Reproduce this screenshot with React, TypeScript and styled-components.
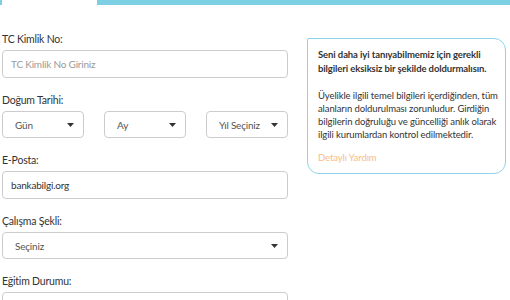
import React from 'react'
import styled, { createGlobalStyle } from 'styled-components'

const GlobalStyle = createGlobalStyle`
  body {
    margin: 0;
    background: #ffffff;
    font-family: Lato, "Open Sans", sans-serif;
    color: #333333;
  }
`

const Caret = () => (
  <svg width="7" height="4" viewBox="0 0 7 4">
    <path d="M0 0 L7 0 L3.5 4 Z" fill="#333" />
  </svg>
)

const App = () => {
  return (
    <Page>
      <GlobalStyle />
      <TabStrip>
        <TabEdge />
        <ActiveTab />
        <TabFill />
      </TabStrip>
      <Content>
        <Form>
          <Field>
            <Label>TC Kimlik No:</Label>
            <Input placeholder="TC Kimlik No Giriniz" />
          </Field>
          <Field>
            <Label>Doğum Tarihi:</Label>
            <DateRow>
              <Select>
                <span>Gün</span>
                <Caret />
              </Select>
              <Select>
                <span>Ay</span>
                <Caret />
              </Select>
              <Select>
                <span>Yıl Seçiniz</span>
                <Caret />
              </Select>
            </DateRow>
          </Field>
          <Field>
            <Label>E-Posta:</Label>
            <Input defaultValue="bankabilgi.org" />
          </Field>
          <Field>
            <Label>Çalışma Şekli:</Label>
            <Select>
              <span>Seçiniz</span>
              <Caret />
            </Select>
          </Field>
          <Field>
            <Label>Eğitim Durumu:</Label>
            <Select>
              <span>Seçiniz</span>
              <Caret />
            </Select>
          </Field>
        </Form>
        <InfoBox>
          <Lead>
            Seni daha iyi tanıyabilmemiz için gerekli bilgileri eksiksiz bir
            şekilde doldurmalısın.
          </Lead>
          <Body>
            Üyelikle ilgili temel bilgileri içerdiğinden, tüm alanların
            doldurulması zorunludur. Girdiğin bilgilerin doğruluğu ve güncelliği
            anlık olarak ilgili kurumlardan kontrol edilmektedir.
          </Body>
          <HelpLink href="#">Detaylı Yardım</HelpLink>
        </InfoBox>
      </Content>
    </Page>
  )
}

const Page = styled.div`
  width: 510px;
  height: 300px;
  overflow: hidden;
`

const TabStrip = styled.div`
  display: flex;
  height: 5px;
`

const TabEdge = styled.div`
  width: 2px;
  background: #7dd0e3;
`

const ActiveTab = styled.div`
  width: 95px;
  background: #ffffff;
`

const TabFill = styled.div`
  flex: 1;
  background: #7dd0e3;
`

const Content = styled.div`
  display: flex;
  align-items: flex-start;
  padding: 26px 0 0 2px;
`

const Form = styled.div`
  width: 286px;
  display: flex;
  flex-direction: column;
  gap: 14px;
`

const Field = styled.div`
  display: flex;
  flex-direction: column;
  gap: 3px;
`

const Label = styled.label`
  font-size: 10.5px;
  letter-spacing: -0.2px;
  line-height: 16px;
  color: #333333;
`

const Input = styled.input`
  box-sizing: border-box;
  height: 28px;
  width: 100%;
  border: 1px solid #cccccc;
  border-radius: 4px;
  padding: 0 8px;
  font-family: inherit;
  font-size: 10px;
  letter-spacing: -0.2px;
  color: #333333;
  outline: none;

  &::placeholder {
    color: #9a9a9a;
  }
`

const DateRow = styled.div`
  display: grid;
  grid-template-columns: repeat(3, 1fr);
  column-gap: 20px;
`

const Select = styled.div`
  box-sizing: border-box;
  height: 27px;
  border: 1px solid #cccccc;
  border-radius: 4px;
  padding: 0 9px 0 12px;
  display: flex;
  align-items: center;
  justify-content: space-between;
  font-size: 10px;
  letter-spacing: -0.2px;
  color: #555555;
`

const InfoBox = styled.div`
  box-sizing: border-box;
  width: 199px;
  margin: 7px 0 0 19px;
  padding: 8.5px 3px 9px 10px;
  border: 1.5px solid #8dd4e6;
  border-radius: 2px 12px 12px 12px;
  font-size: 9.5px;
  letter-spacing: -0.1px;
  line-height: 13px;
`

const Lead = styled.p`
  margin: 0 0 13.5px;
  font-weight: 700;
  line-height: 14px;
`

const Body = styled.p`
  margin: 0 0 10px;
`

const HelpLink = styled.a`
  display: block;
  color: #f6bd86;
  text-decoration: none;
`

export default App
